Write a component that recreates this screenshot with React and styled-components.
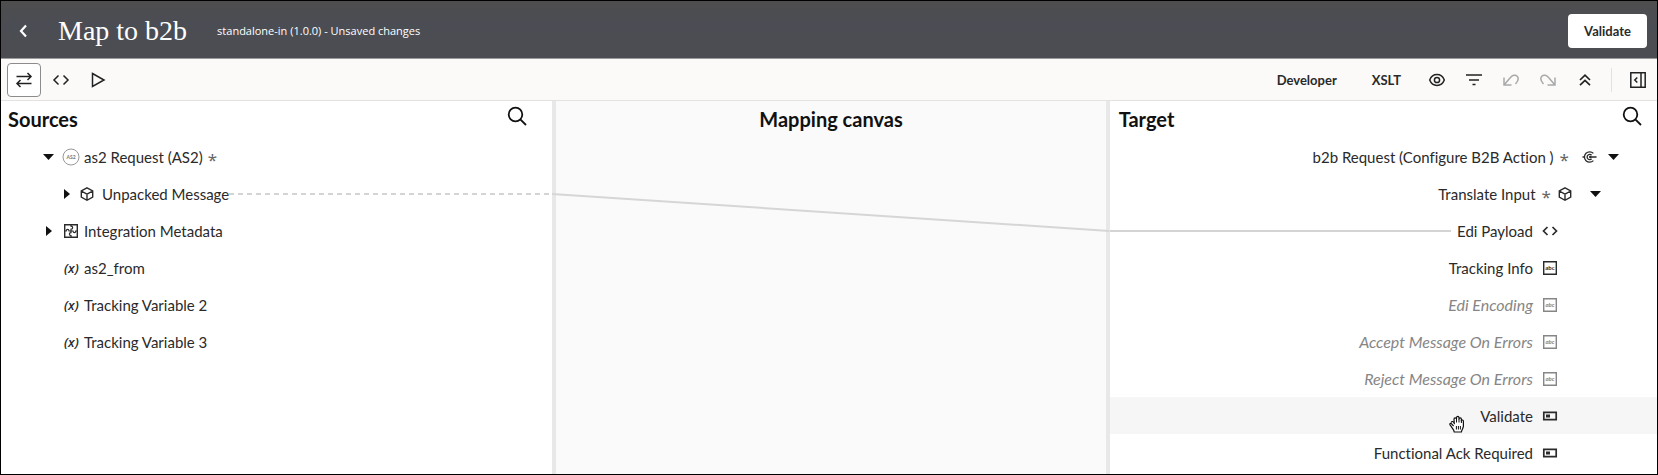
import React from "react"
import styled, { createGlobalStyle } from "styled-components"

const sourceItems = [
  { label: "as2 Request (AS2)", icon: "adapter", depth: 0, caret: "down", required: true },
  { label: "Unpacked Message", icon: "cube", depth: 1, caret: "right", link: "dashed" },
  { label: "Integration Metadata", icon: "metadata", depth: 0, caret: "right" },
  { label: "as2_from", icon: "variable", depth: 0 },
  { label: "Tracking Variable 2", icon: "variable", depth: 0 },
  { label: "Tracking Variable 3", icon: "variable", depth: 0 },
]

const targetItems = [
  { label: "b2b Request (Configure B2B Action )", icon: "action", depth: 0, caret: "down", required: true },
  { label: "Translate Input", icon: "cube", depth: 1, caret: "down", required: true },
  { label: "Edi Payload", icon: "element", depth: 2, link: "solid" },
  { label: "Tracking Info", icon: "string", depth: 2 },
  { label: "Edi Encoding", icon: "string", depth: 2, muted: true },
  { label: "Accept Message On Errors", icon: "string", depth: 2, muted: true },
  { label: "Reject Message On Errors", icon: "string", depth: 2, muted: true },
  { label: "Validate", icon: "attribute", depth: 2, hovered: true },
  { label: "Functional Ack Required", icon: "attribute", depth: 2 },
]

// every tree icon is drawn on a 22 x 20 grid
const treeIcons = {
  adapter: (
    <>
      <circle cx="10" cy="10" r="8" stroke="#999" strokeWidth="1" />
      <text x="10" y="12" textAnchor="middle" fontSize="5" fontWeight="700" fill="#777" stroke="none">
        AS2
      </text>
    </>
  ),
  cube: (
    <path d="M8 3.9 L13.7 7 V13.2 L8 16.3 L2.3 13.2 V7 Z M2.3 7 L8 10.1 L13.7 7 M8 10.1 V16.3" />
  ),
  metadata: (
    <>
      <path d="M3.7 3.7 H16.3 V16.3 H3.7 Z" />
      <path
        d="M10 3.7 V5.2 C12.2 5.4 12.2 8 10 8.2 V11.6 C7.8 11.8 7.8 14.4 10 14.6 V16.3 M3.7 10 H5.2 C5.4 7.8 7.8 7.8 8 10 H12 C12.2 12.2 14.6 12.2 14.8 10 H16.3"
        strokeWidth="1.2"
      />
    </>
  ),
  action: (
    <>
      <path
        d="M18.4 6.4 A5.2 5.2 0 1 0 18.4 13.6 M16.6 8.2 A2.6 2.6 0 1 0 16.6 11.8 M15.5 10 H21.5 M7.5 10 H9.4"
        strokeWidth="1.3"
      />
      <circle cx="15.2" cy="10" r="1.2" fill="currentColor" stroke="none" />
    </>
  ),
  element: <path d="M8.5 6 L4.5 10 L8.5 14 M13.5 6 L17.5 10 L13.5 14" strokeWidth="1.7" />,
  string: (
    <>
      <path d="M4.7 3.7 H17.3 V16.3 H4.7 Z" />
      <text x="11" y="12" textAnchor="middle" fontSize="6" fontWeight="700" fill="currentColor" stroke="none">
        abc
      </text>
    </>
  ),
  attribute: (
    <>
      <path d="M4.8 6.3 H17.2 V13.7 H4.8 Z" strokeWidth="1.7" />
      <path d="M7 8.5 H11 V11.5 H7 Z" fill="currentColor" stroke="none" />
    </>
  ),
}

const TreeIcon = ({ name }) =>
  name === "variable" ? (
    <VariableMark aria-hidden="true">(x)</VariableMark>
  ) : (
    <TreeSvg viewBox="0 0 22 20" aria-hidden="true">
      {treeIcons[name]}
    </TreeSvg>
  )

const Caret = ({ direction, label }) => (
  <CaretSlot>
    {direction && (
      <CaretButton type="button" aria-label={`Toggle ${label}`}>
        <svg width="20" height="20" viewBox="0 0 20 20" aria-hidden="true">
          <path d={direction === "down" ? "M5 7 H16 L10.5 13 Z" : "M8 5 L14 10 L8 15 Z"} fill="#111" />
        </svg>
      </CaretButton>
    )}
  </CaretSlot>
)

const Link = ({ kind }) => (
  <LinkLine aria-hidden="true">
    <line x1="0" y1="1" x2="100%" y2="1" strokeDasharray={kind === "dashed" ? "5 4" : undefined} />
  </LinkLine>
)

const SearchIcon = () => (
  <svg width="20" height="20" viewBox="0 0 20 20" fill="none" stroke="#111" strokeWidth="1.8" aria-hidden="true">
    <circle cx="8.5" cy="8.5" r="6.8" />
    <path d="M13.3 13.3 L19 19" />
  </svg>
)

const ToolIcon = ({ children }) => (
  <svg
    width="18"
    height="18"
    viewBox="0 0 18 18"
    fill="none"
    stroke="currentColor"
    strokeWidth="1.5"
    aria-hidden="true"
  >
    {children}
  </svg>
)

const GrabHand = () => (
  <HandSvg viewBox="0 0 16 18" aria-hidden="true">
    <path
      d="M4.6 11 L2.6 8.8 C1.6 7.8 0.4 8.8 1.1 9.9 L4 14.2 C4.8 15.4 5 15.7 5.2 17 H12.4 C12.6 15.2 14 13.8 14.4 11.4 V6.2 C14.4 4.6 12.4 4.6 12.4 6 V4.2 C12.4 2.5 10.1 2.5 10 4 V2.6 C9.9 1 7.7 1 7.5 2.6 V4 C7.2 2.4 5 2.7 5 4.2 L5.3 8.6 C4.6 6.2 2.2 5.8 2.5 7.6"
      fill="#fff"
      stroke="#111"
      strokeWidth="1.2"
      strokeLinejoin="round"
    />
    <path d="M7.5 3.5 V7.5 M10 4 V7.5 M12.4 5.5 V8 M7.4 11 V14.5 M9.4 11 V14.5 M11.4 11 V14.5" stroke="#111" />
  </HandSvg>
)

const SourceRow = ({ item }) => (
  <SourceItem $depth={item.depth}>
    <Caret direction={item.caret} label={item.label} />
    <TreeIcon name={item.icon} />
    <Label>{item.label}</Label>
    {item.required && <Star>*</Star>}
    {item.link && <Link kind={item.link} />}
  </SourceItem>
)

const TargetRow = ({ item }) => (
  <TargetItem $depth={item.depth} $muted={item.muted} $hovered={item.hovered}>
    {item.link && <Link kind={item.link} />}
    {item.hovered && <GrabHand />}
    <Label>{item.label}</Label>
    {item.required && <Star>*</Star>}
    <TreeIcon name={item.icon} />
    <Caret direction={item.caret} label={item.label} />
  </TargetItem>
)

export default function App() {
  return (
    <Page>
      <GlobalStyle />
      <Header>
        <BackButton type="button" aria-label="Back">
          <svg width="10" height="16" viewBox="0 0 10 16" fill="none" stroke="#fff" strokeWidth="2.2" aria-hidden="true">
            <path d="M8 2.5 L3 8 L8 13.5" />
          </svg>
        </BackButton>
        <Title>Map to b2b</Title>
        <Status>standalone-in (1.0.0) - Unsaved changes</Status>
        <ValidateButton type="button">Validate</ValidateButton>
      </Header>

      <Toolbar>
        <ToolGroup>
          <ToolButton type="button" aria-label="Mapper" $selected>
            <ToolIcon>
              <path d="M1.5 5.5 H16 M12.5 2 L16 5.5 L12.5 9 M16.5 12.5 H2 M5.5 9 L2 12.5 L5.5 16" />
            </ToolIcon>
          </ToolButton>
          <ToolButton type="button" aria-label="Code">
            <ToolIcon>
              <path d="M6.5 4.5 L2 9 L6.5 13.5 M11.5 4.5 L16 9 L11.5 13.5" />
            </ToolIcon>
          </ToolButton>
          <ToolButton type="button" aria-label="Test">
            <ToolIcon>
              <path d="M3.5 2.5 L15 9 L3.5 15.5 Z" />
            </ToolIcon>
          </ToolButton>
        </ToolGroup>
        <ToolGroup>
          <TextButton type="button">Developer</TextButton>
          <TextButton type="button">XSLT</TextButton>
          <ToolButton type="button" aria-label="View">
            <ToolIcon>
              <path d="M1.7 9 C4.5 1.8 13.5 1.8 16.3 9 C13.5 16.2 4.5 16.2 1.7 9 Z" />
              <circle cx="9" cy="9" r="2.6" />
            </ToolIcon>
          </ToolButton>
          <ToolButton type="button" aria-label="Filter">
            <ToolIcon>
              <path d="M1 4 H17 M4 9 H14 M7.5 13.5 H10.5" strokeWidth="1.7" />
            </ToolIcon>
          </ToolButton>
          <ToolButton type="button" aria-label="Undo" disabled>
            <ToolIcon>
              <path d="M2 6.5 V14 H9.5 M2 14 L8.2 6.8 C10.2 4.2 13.2 3.2 15.2 5.2 C17.2 7.4 16.2 10 13.5 13" />
            </ToolIcon>
          </ToolButton>
          <ToolButton type="button" aria-label="Redo" disabled>
            <ToolIcon>
              <path d="M16 6.5 V14 H8.5 M16 14 L9.8 6.8 C7.8 4.2 4.8 3.2 2.8 5.2 C0.8 7.4 1.8 10 4.5 13" />
            </ToolIcon>
          </ToolButton>
          <ToolButton type="button" aria-label="Collapse all">
            <ToolIcon>
              <path d="M4 9 L9 4.2 L14 9 M4 14.2 L9 9.4 L14 14.2" strokeWidth="1.7" />
            </ToolIcon>
          </ToolButton>
          <Divider />
          <ToolButton type="button" aria-label="Open panel">
            <ToolIcon>
              <path d="M1.8 1.8 H16.2 V16.2 H1.8 Z M12 1.8 V16.2 M8.3 6.5 L5.8 9 L8.3 11.5" />
            </ToolIcon>
          </ToolButton>
        </ToolGroup>
      </Toolbar>

      <Panels>
        <Panel>
          <PanelHeader $start={7} $end={25}>
            <PanelTitle>Sources</PanelTitle>
            <SearchButton type="button" aria-label="Search sources">
              <SearchIcon />
            </SearchButton>
          </PanelHeader>
          <Tree>
            {sourceItems.map(item => (
              <SourceRow key={item.label} item={item} />
            ))}
          </Tree>
        </Panel>
        <Splitter />
        <Canvas>
          <PanelTitle>Mapping canvas</PanelTitle>
          <CanvasLines aria-hidden="true">
            <line x1="0" y1="93" x2="100%" y2="130" />
          </CanvasLines>
        </Canvas>
        <Splitter />
        <Panel>
          <PanelHeader $start={9} $end={15}>
            <PanelTitle>Target</PanelTitle>
            <SearchButton type="button" aria-label="Search target">
              <SearchIcon />
            </SearchButton>
          </PanelHeader>
          <Tree>
            {targetItems.map(item => (
              <TargetRow key={item.label} item={item} />
            ))}
          </Tree>
        </Panel>
      </Panels>
    </Page>
  )
}

const GlobalStyle = createGlobalStyle`
  *,
  *::before,
  *::after {
    box-sizing: border-box;
  }
  body {
    margin: 0;
    background: #fff;
    color: #2a2a2a;
    font-family: Lato, "Noto Sans", sans-serif;
    font-size: 15px;
    font-variant-ligatures: none;
  }
  button {
    font-family: inherit;
    padding: 0;
    border: 0;
    background: none;
    color: inherit;
    cursor: pointer;
  }
  svg {
    flex: none;
    display: block;
  }
`

const Page = styled.div`
  min-height: 100vh;
  display: flex;
  flex-direction: column;
  border: 1px solid #000;
`

const Header = styled.header`
  height: 58px;
  display: flex;
  align-items: center;
  padding: 2px 10px 0 17px;
  background: linear-gradient(#4e4e4e, #4b4d54 40%, #4b4d52);
  border-bottom: 1px solid #9b9b9d;
  color: #fff;
`

const BackButton = styled.button`
  width: 40px;
  height: 32px;
  display: flex;
  align-items: center;
`

const Title = styled.h1`
  margin: 0;
  font-family: "Liberation Serif", serif;
  font-size: 28px;
  line-height: 34px;
  font-weight: 400;
  white-space: nowrap;
`

const Status = styled.span`
  margin-left: 30px;
  font-family: "Open Sans", sans-serif;
  font-size: 11px;
  font-weight: 500;
  white-space: nowrap;
`

const ValidateButton = styled.button`
  width: 79px;
  height: 34px;
  margin-left: auto;
  background: #fff;
  border-radius: 4px;
  color: #2a2a2a;
  font-size: 13px;
  font-weight: 700;
`

const Toolbar = styled.div`
  height: 42px;
  display: flex;
  align-items: center;
  justify-content: space-between;
  padding: 0 2px 0 6px;
  background: #fbfaf9;
  border-bottom: 1px solid #e4e2e0;
`

const ToolGroup = styled.div`
  display: flex;
  align-items: center;
  gap: 3px;
`

const ToolButton = styled.button`
  width: 34px;
  height: 34px;
  display: flex;
  align-items: center;
  justify-content: center;
  border: 1px solid ${props => (props.$selected ? "#8c8c8c" : "transparent")};
  border-radius: 4px;
  background: ${props => (props.$selected ? "#fff" : "none")};
  color: #222;
  &:disabled {
    color: #a9a9a9;
    cursor: default;
  }
`

const TextButton = styled.button`
  height: 34px;
  padding: 0 16px;
  font-size: 13px;
  font-weight: 700;
`

const Divider = styled.span`
  width: 1px;
  height: 24px;
  margin: 0 6px;
  background: #e2e2e2;
`

const Panels = styled.main`
  flex: 1;
  display: grid;
  grid-template-columns: 551fr 4px 549fr 4px 547fr;
`

const Panel = styled.section`
  min-width: 0;
  background: #fff;
`

const Splitter = styled.div`
  background: #e8e8e8;
`

const PanelHeader = styled.div`
  display: flex;
  justify-content: space-between;
  align-items: flex-start;
  padding: 0 ${props => props.$end}px 0 ${props => props.$start}px;
`

const PanelTitle = styled.h2`
  margin: 0;
  font-size: 20px;
  line-height: 37px;
  font-weight: 700;
  color: #111;
`

const SearchButton = styled.button`
  margin-top: 5px;
`

const Canvas = styled.section`
  position: relative;
  background: #fafafa;
  text-align: center;
`

// reaches over both splitters so the link meets the row lines
const CanvasLines = styled.svg`
  position: absolute;
  top: 0;
  left: -4px;
  width: calc(100% + 8px);
  height: 100%;
  pointer-events: none;
  stroke: #d6d6d6;
  stroke-width: 2;
`

const Tree = styled.ul`
  margin: 0;
  padding: 0;
  list-style: none;
`

const Label = styled.span`
  line-height: 20px;
`

const Star = styled.span`
  height: 12px;
  font-family: "Noto Sans", sans-serif;
  font-size: 17px;
  line-height: 17px;
  color: #666;
`

const CaretSlot = styled.span`
  width: 20px;
  flex: none;
`

const CaretButton = styled.button`
  display: block;
`

const Item = styled.li`
  height: 37px;
  display: flex;
  align-items: center;
  white-space: nowrap;
`

const SourceItem = styled(Item)`
  padding-left: ${props => 37 + props.$depth * 18}px;
  ${CaretSlot} {
    margin-right: 3px;
  }
  ${Label} {
    margin-left: 1px;
  }
  ${Star} {
    margin-left: 5px;
  }
`

const TargetItem = styled(Item)`
  position: relative;
  justify-content: flex-end;
  gap: 6px;
  padding-right: ${props => 34 + props.$depth * 18}px;
  background: ${props => (props.$hovered ? "#f6f6f6" : "none")};
  color: ${props => (props.$muted ? "#868686" : "inherit")};
  font-size: ${props => (props.$muted ? 16 : 15)}px;
  font-style: ${props => (props.$muted ? "italic" : "normal")};
`

const TreeSvg = styled.svg`
  width: 22px;
  height: 20px;
  fill: none;
  stroke: currentColor;
  stroke-width: 1.4;
`

const VariableMark = styled.span`
  width: 22px;
  flex: none;
  padding-left: 3px;
  font-family: "Open Sans", sans-serif;
  font-size: 13px;
  line-height: 20px;
  font-style: italic;
  font-weight: 600;
`

const LinkLine = styled.svg`
  flex: 1;
  height: 2px;
  min-width: 0;
  stroke: #d4d4d4;
  stroke-width: 2;
`

const HandSvg = styled.svg`
  position: absolute;
  top: 18px;
  right: 192px;
  width: 16px;
  height: 18px;
`
